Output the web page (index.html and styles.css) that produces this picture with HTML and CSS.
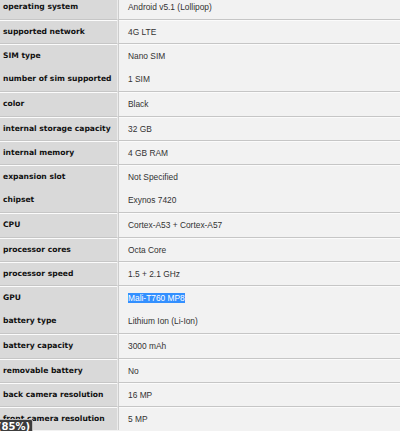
FILE: index.html
```html
<!DOCTYPE html>
<html>
<head>
<meta charset="utf-8">
<link rel="stylesheet" href="styles.css">
</head>
<body>
<div class="specs">
  <div class="row"><div class="k">operating system</div><div class="v">Android v5.1 (Lollipop)</div></div>
  <div class="row sep"><div class="k">supported network</div><div class="v">4G LTE</div></div>
  <div class="row sep"><div class="k">SIM type</div><div class="v">Nano SIM</div></div>
  <div class="row"><div class="k">number of sim supported</div><div class="v">1 SIM</div></div>
  <div class="row sep tall"><div class="k">color</div><div class="v">Black</div></div>
  <div class="row sep"><div class="k">internal storage capacity</div><div class="v">32 GB</div></div>
  <div class="row sep"><div class="k">internal memory</div><div class="v">4 GB RAM</div></div>
  <div class="row sep"><div class="k">expansion slot</div><div class="v">Not Specified</div></div>
  <div class="row"><div class="k">chipset</div><div class="v">Exynos 7420</div></div>
  <div class="row sep tall"><div class="k">CPU</div><div class="v">Cortex-A53 + Cortex-A57</div></div>
  <div class="row sep"><div class="k">processor cores</div><div class="v">Octa Core</div></div>
  <div class="row sep"><div class="k">processor speed</div><div class="v">1.5 + 2.1 GHz</div></div>
  <div class="row sep"><div class="k">GPU</div><div class="v"><span class="sel">Mali-T760 MP8</span></div></div>
  <div class="row"><div class="k">battery type</div><div class="v">Lithium Ion (Li-Ion)</div></div>
  <div class="row sep tall"><div class="k">battery capacity</div><div class="v">3000 mAh</div></div>
  <div class="row sep"><div class="k">removable battery</div><div class="v">No</div></div>
  <div class="row sep"><div class="k">back camera resolution</div><div class="v">16 MP</div></div>
  <div class="row sep"><div class="k">front camera resolution</div><div class="v">5 MP</div></div>
</div>
<div class="zoom">(85%)</div>
</body>
</html>
```
FILE: styles.css
```css
html, body {
  margin: 0;
  padding: 0;
  background: #f2f2f2;
  overflow: hidden;
}
.specs {
  margin-top: -5px;
  display: flex;
  flex-direction: column;
}
.row {
  display: flex;
  height: 24px;
}
.row.tall {
  height: 25px;
}
.k {
  width: 118px;
  flex: none;
  background: #d9d9d9;
  border-right: 1px solid #ececec;
  padding-left: 3px;
  padding-bottom: 1px;
  box-sizing: border-box;
  font-family: "DejaVu Sans", Verdana, sans-serif;
  font-weight: bold;
  font-size: 7.6px;
  color: #111;
  display: flex;
  align-items: center;
  white-space: nowrap;
}
.v {
  flex: 1;
  border-left: 1px solid #cdcdcd;
  background: #f2f2f2;
  padding-left: 9px;
  font-family: "Liberation Sans", Arial, sans-serif;
  font-size: 8.4px;
  color: #333;
  display: flex;
  align-items: center;
  white-space: nowrap;
}
.sep .k, .sep .v {
  border-top: 1px solid #c6c6c6;
  box-shadow: inset 0 1px 0 #fbfbfb;
}
.sel {
  background: #3390ff;
  color: #fff;
}
.zoom {
  position: absolute;
  left: -5px;
  top: 419px;
  height: 13px;
  padding: 0 2px 0 1px;
  background: #3c3c3c;
  border: 1px solid #bdbdbd;
  border-radius: 2px;
  color: #fff;
  font-family: "DejaVu Sans", sans-serif;
  font-weight: bold;
  font-size: 10px;
  line-height: 13px;
}
```
